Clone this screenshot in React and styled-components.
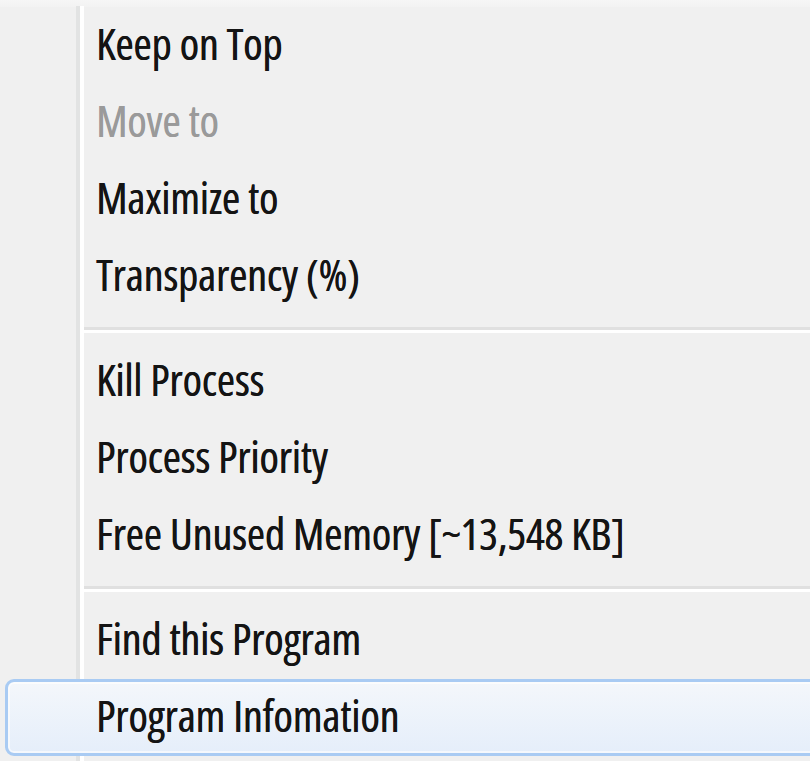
import React from "react";
import styled, { createGlobalStyle } from "styled-components";

const Global = createGlobalStyle`
  html, body { margin: 0; padding: 0; background: #f0f0f0; }
  body { width: 810px; height: 761px; overflow: hidden; }
`;

const Menu = styled.div`
  position: relative;
  width: 810px;
  height: 761px;
  overflow: hidden;
  background: #f0f0f0;
  font-family: "Open Sans", "Noto Sans", sans-serif;
  font-stretch: 80%;
`;

const TopStrip = styled.div`
  height: 7px;
  background: linear-gradient(#f6f6f6, #f2f2f2);
`;

const Gutter = styled.div`
  position: absolute;
  left: 76px;
  top: 6px;
  bottom: 0;
  width: 4px;
  background: #e2e3e3;
  border-right: 4px solid #ffffff;
`;

const Item = styled.div`
  position: relative;
  height: 77px;
  display: flex;
  align-items: center;
  padding-left: 96px;
  font-size: 44px;
  letter-spacing: -0.1px;
  color: ${(p) => (p.$disabled ? "#9a9a9a" : "#141414")};
  text-shadow: 0.4px 0 0 currentColor;
  box-sizing: border-box;
`;

const Highlight = styled.div`
  position: absolute;
  left: 5px;
  right: -30px;
  top: 0;
  bottom: 0;
  border: 3px solid #a9cbf3;
  border-radius: 9px;
  background: linear-gradient(#f4f7fb, #e5eefa);
  box-shadow: inset 0 0 0 2px rgba(255, 255, 255, 0.6);
`;

const Label = styled.span`
  position: relative;
  line-height: 1;
  margin-top: -5px;
`;

const Separator = styled.div`
  height: 28px;
  display: flex;
  flex-direction: column;
  justify-content: flex-start;
  padding-top: 12px;
  padding-left: 84px;
  box-sizing: border-box;
  &::before {
    content: "";
    display: block;
    height: 3px;
    background: #e0e0e0;
  }
  &::after {
    content: "";
    display: block;
    height: 3px;
    background: #ffffff;
  }
`;

const groups = [
  [
    { label: "Keep on Top" },
    { label: "Move to", disabled: true },
    { label: "Maximize to" },
    { label: "Transparency (%)" },
  ],
  [
    { label: "Kill Process" },
    { label: "Process Priority" },
    { label: "Free Unused Memory [~13,548 KB]" },
  ],
  [{ label: "Find this Program" }, { label: "Program Infomation", active: true }],
];

export default function App() {
  return (
    <>
      <Global />
      <Menu>
        <TopStrip />
        <Gutter />
        {groups.map((g, gi) => (
          <React.Fragment key={gi}>
            {gi > 0 && <Separator />}
            {g.map((it) => (
              <Item key={it.label} $disabled={it.disabled}>
                {it.active && <Highlight />}
                <Label>{it.label}</Label>
              </Item>
            ))}
          </React.Fragment>
        ))}
      </Menu>
    </>
  );
}
